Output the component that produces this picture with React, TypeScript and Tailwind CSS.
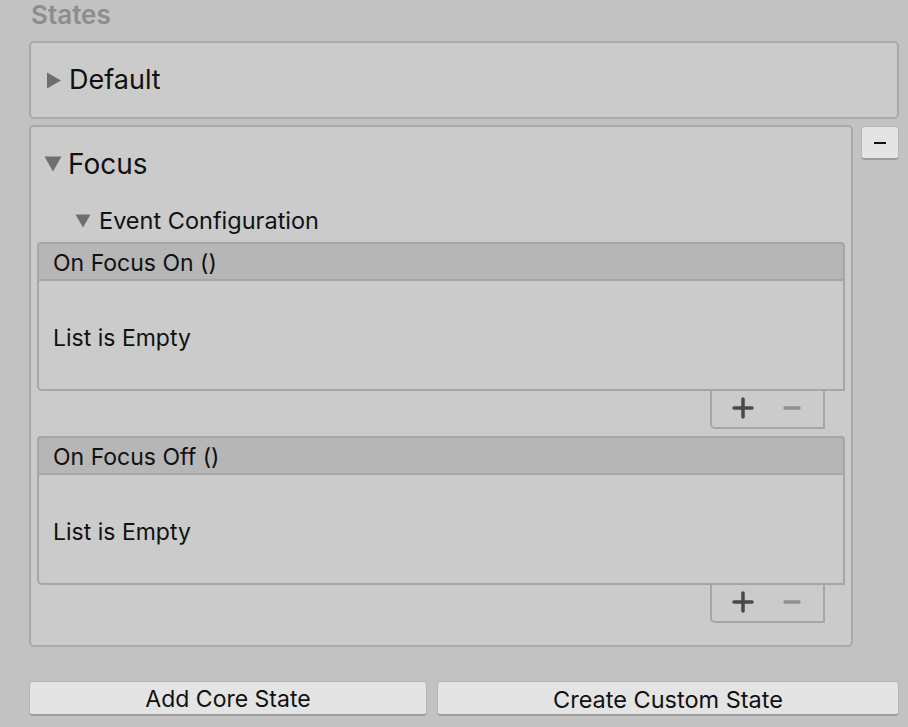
import React from "react";

const font = { fontFamily: "Inter, 'Noto Sans', sans-serif" };

function TriRight() {
  return (
    <svg width="16" height="17" viewBox="0 0 16 17" className="shrink-0">
      <polygon points="1,0.5 15,8.5 1,16.5" fill="#6f6f6f" />
    </svg>
  );
}

function TriDown({ w, h }: { w: number; h: number }) {
  return (
    <svg width={w} height={h} viewBox={`0 0 ${w} ${h}`} className="shrink-0">
      <polygon points={`0.5,0.5 ${w - 0.5},0.5 ${w / 2},${h - 0.5}`} fill="#6f6f6f" />
    </svg>
  );
}

function EventList({ title }: { title: string }) {
  return (
    <div className="flex flex-col">
      <div className="h-[39px] bg-[#b6b6b6] border-2 border-[#a6a6a6] rounded-t-[4px] flex items-center pl-[14px] pt-[3px] text-[23px] text-[#111]">
        {title}
      </div>
      <div className="h-[110px] border-2 border-t-0 border-[#a6a6a6] rounded-bl-[5px] flex items-center pl-[14px] pt-[6px] text-[23px] text-[#111]">
        List is Empty
      </div>
      <div className="self-end mr-[20px] w-[115px] h-[38px] border-2 border-t-0 border-[#a6a6a6] rounded-bl-[5px] flex items-center">
        <svg width="22" height="22" viewBox="0 0 22 22" className="ml-[20px] mb-[2px]">
          <path d="M11 2 V20 M2 11 H20" stroke="#4a4a4a" strokeWidth="3.5" strokeLinecap="round" />
        </svg>
        <svg width="18" height="6" viewBox="0 0 18 6" className="ml-[29px] mb-[2px]">
          <path d="M2 3 H16" stroke="#909090" strokeWidth="3.5" strokeLinecap="round" />
        </svg>
      </div>
    </div>
  );
}

export default function App() {
  return (
    <div style={font} className="w-[908px] h-[727px] bg-[#c2c2c2] overflow-hidden pl-[29px] pr-[9px] flex flex-col">
      <div className="h-[41px] flex items-start">
        <span className="text-[26px] font-semibold text-[#8d8d8d] leading-[28px] mt-[1px] pl-[2px]">States</span>
      </div>
      <div className="h-[78px] bg-[#cbcbcb] border-2 border-[#a9a9a9] rounded-[5px] flex items-center pl-[15px] gap-[7px]">
        <TriRight />
        <span className="text-[27px] text-[#111] leading-none pb-[1px]">Default</span>
      </div>
      <div className="mt-[6px] flex items-start gap-[8px]">
        <div className="w-[824px] h-[522px] bg-[#cbcbcb] border-2 border-[#a9a9a9] rounded-[5px] flex flex-col px-[6px]">
          <div className="h-[72px] flex items-center pl-[7px] pt-[2px] gap-[6px]">
            <TriDown w={18} h={16} />
            <span className="text-[28px] text-[#111] leading-none">Focus</span>
          </div>
          <div className="h-[43px] flex items-center pl-[38px] gap-[8px] pt-[1px]">
            <TriDown w={16} h={14} />
            <span className="text-[23.5px] text-[#111] leading-none">Event Configuration</span>
          </div>
          <EventList title="On Focus On ()" />
          <div className="h-[7px]" />
          <EventList title="On Focus Off ()" />
        </div>
        <div className="mt-[1px] w-[38px] h-[34px] bg-[#e4e4e4] border border-[#b5b5b5] border-b-2 border-b-[#9c9c9c] rounded-[4px] flex items-center justify-center">
          <div className="w-[12px] h-[2px] bg-[#111]" />
        </div>
      </div>
      <div className="mt-[34px] flex gap-[10px]">
        <button className="w-[398px] h-[35px] bg-[#e4e4e4] border border-[#b3b3b3] border-b-2 border-b-[#9c9c9c] rounded-[4px] text-[23px] text-[#111] leading-none flex items-center justify-center pt-[3px]">
          Add Core State
        </button>
        <button className="w-[462px] h-[35px] bg-[#e4e4e4] border border-[#b3b3b3] border-b-2 border-b-[#9c9c9c] rounded-[4px] text-[23.5px] text-[#111] leading-none flex items-center justify-center pt-[3px]">
          Create Custom State
        </button>
      </div>
    </div>
  );
}
